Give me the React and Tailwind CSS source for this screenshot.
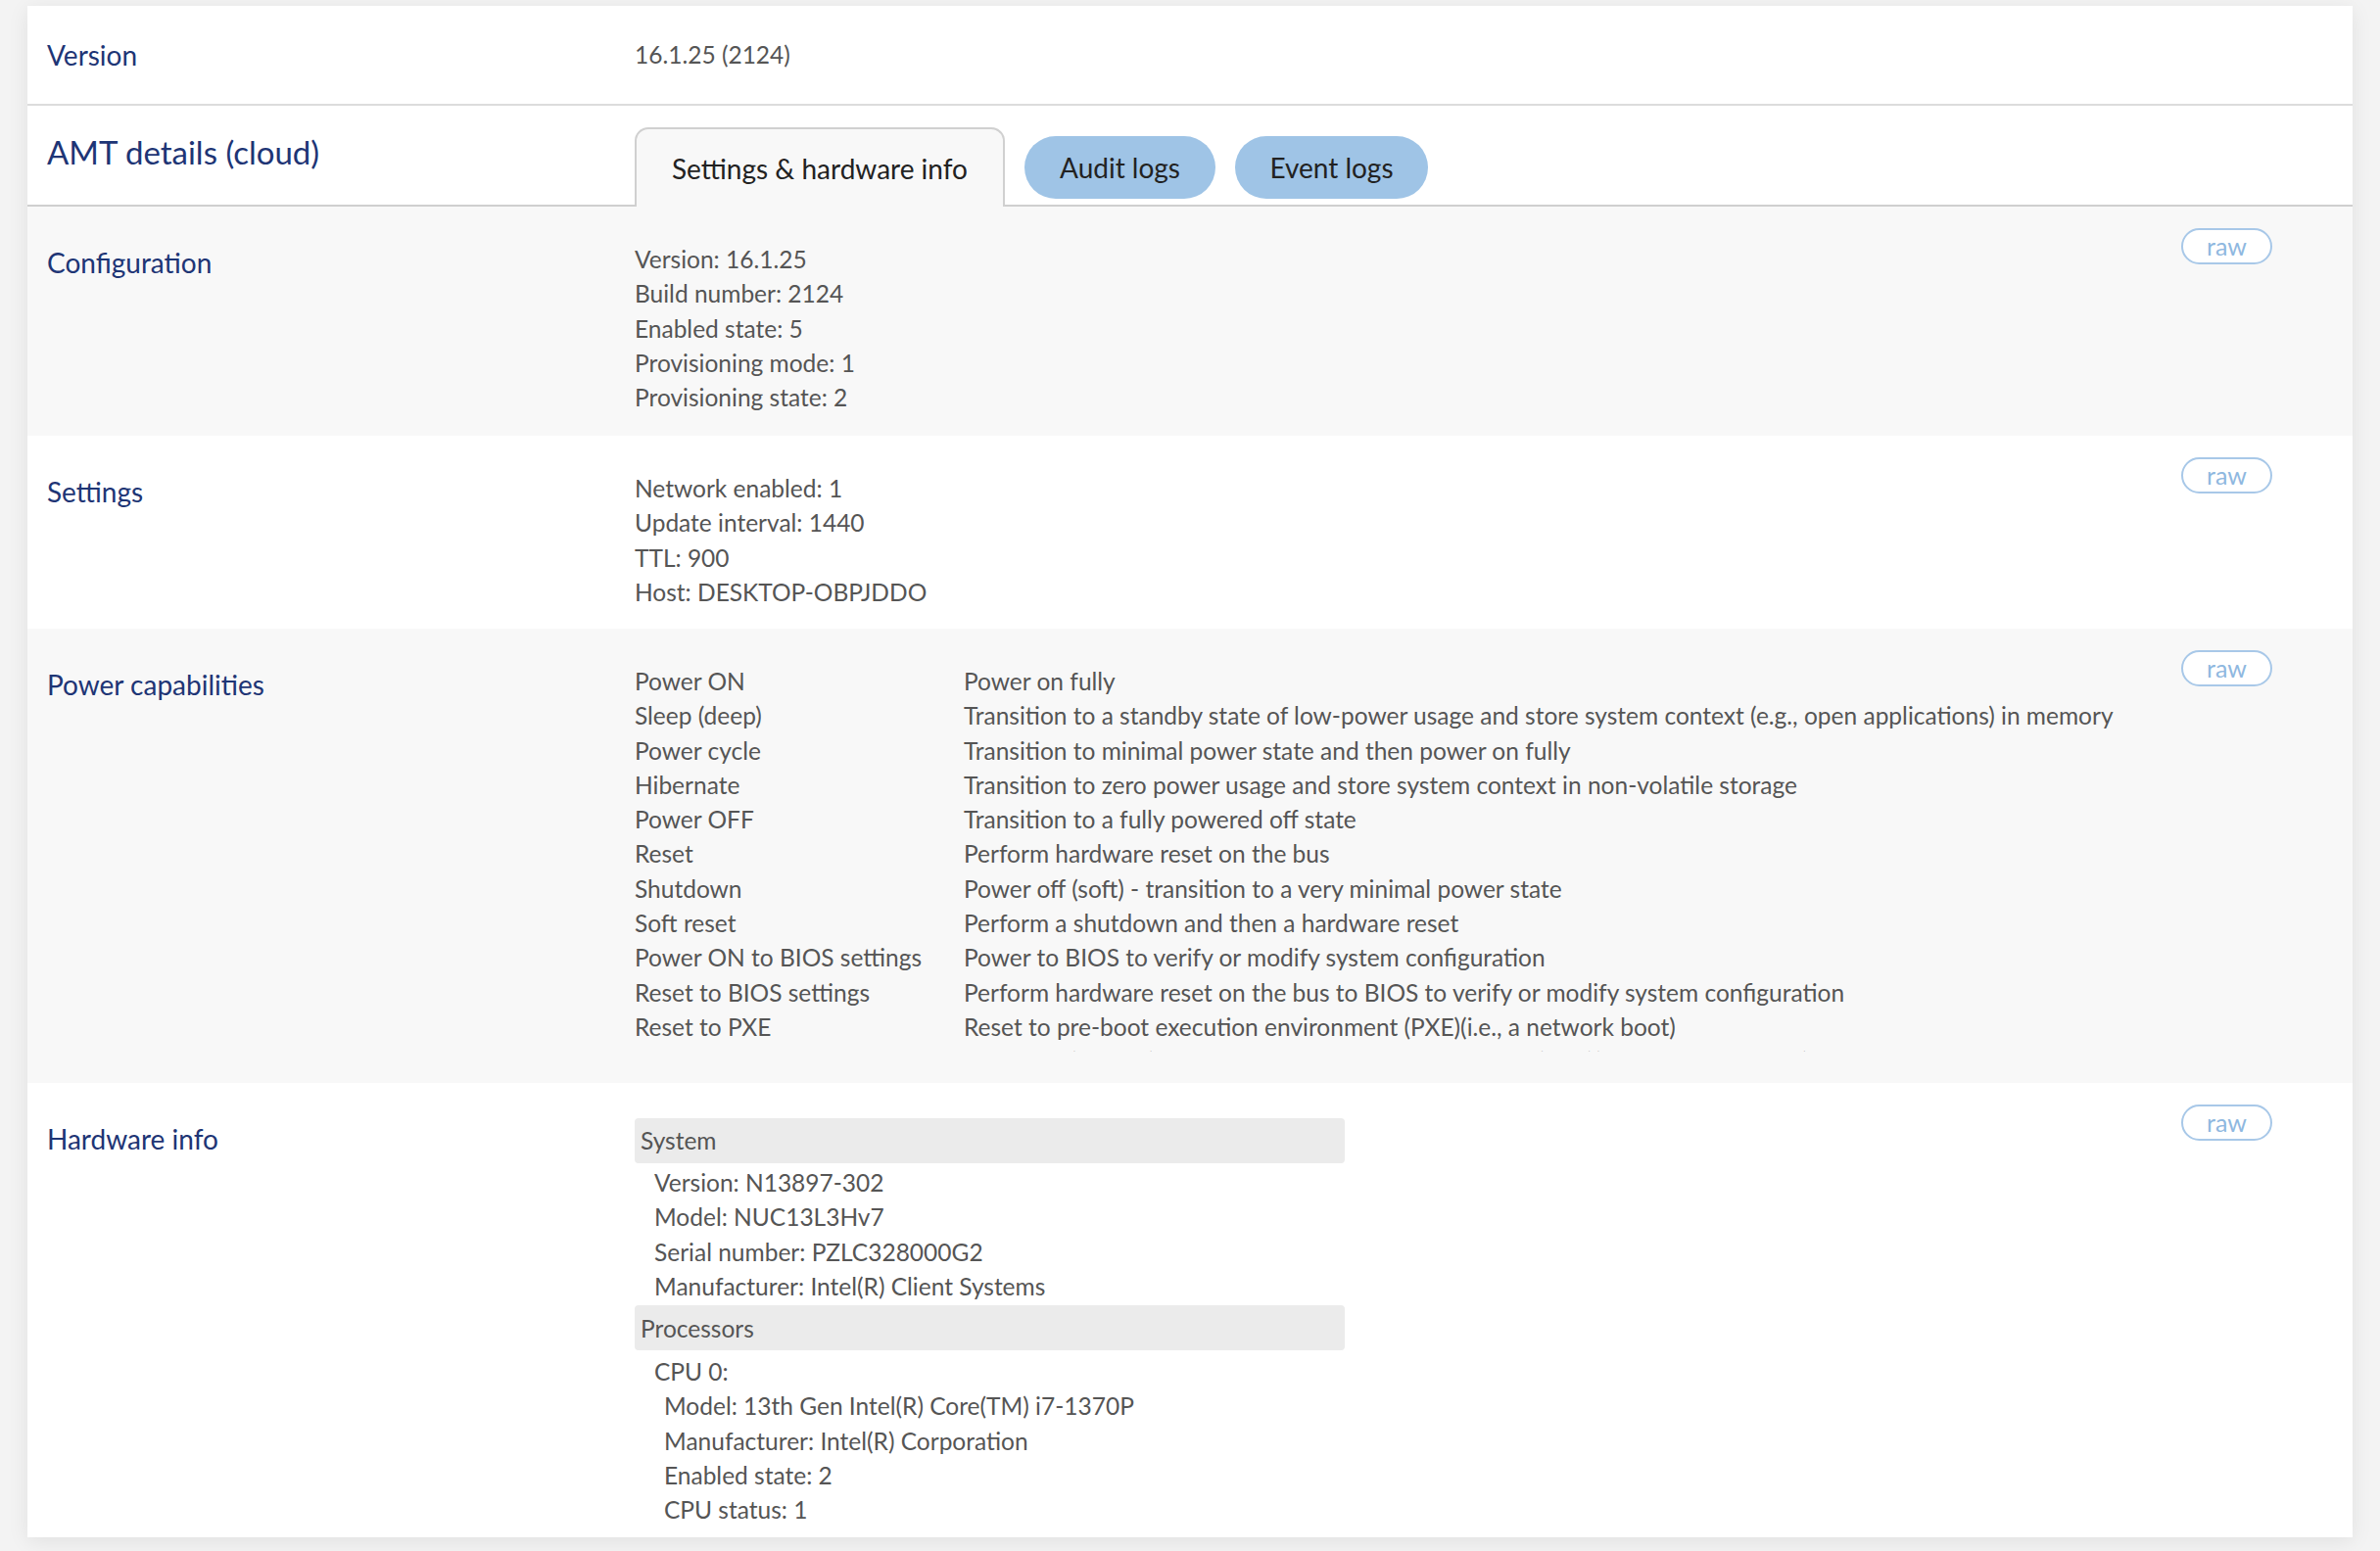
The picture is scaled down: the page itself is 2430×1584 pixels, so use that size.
const font = { fontFamily: '"Lato", "Noto Sans", sans-serif' };

function Raw() {
  return (
    <button className="w-[93px] h-[37px] rounded-full border-2 border-[#a8c8e8] text-[#8fb8e0] text-[25px] leading-none bg-white">
      raw
    </button>
  );
}

function Section({ label, gray, children, className = "" }) {
  return (
    <div className={`flex items-start ${gray ? "bg-[#f8f8f8]" : "bg-white"} ${className}`}>
      <div className="w-[620px] shrink-0 pl-[20px] text-[28px] text-[#1e3575]">{label}</div>
      <div className="flex-1 min-w-0 text-[24.5px] leading-[35.3px] text-[#555]">{children}</div>
      <div className="w-[175px] shrink-0 -mt-[14px]">
        <Raw />
      </div>
    </div>
  );
}

const power = [
  ["Power ON", "Power on fully"],
  ["Sleep (deep)", "Transition to a standby state of low-power usage and store system context (e.g., open applications) in memory"],
  ["Power cycle", "Transition to minimal power state and then power on fully"],
  ["Hibernate", "Transition to zero power usage and store system context in non-volatile storage"],
  ["Power OFF", "Transition to a fully powered off state"],
  ["Reset", "Perform hardware reset on the bus"],
  ["Shutdown", "Power off (soft) - transition to a very minimal power state"],
  ["Soft reset", "Perform a shutdown and then a hardware reset"],
  ["Power ON to BIOS settings", "Power to BIOS to verify or modify system configuration"],
  ["Reset to BIOS settings", "Perform hardware reset on the bus to BIOS to verify or modify system configuration"],
  ["Reset to PXE", "Reset to pre-boot execution environment (PXE)(i.e., a network boot)"],
  ["Power ON to PXE", "Power on (as fully) to pre-boot execution environment (PXE)(i.e., a network boot)"],
];

export default function App() {
  return (
    <div className="min-h-[1584px] bg-[#f3f3f3] pt-[6px] px-[28px]" style={font}>
      <div className="bg-white shadow-[0_4px_20px_rgba(0,0,0,0.08)]">
        <div className="flex items-center h-[102px] border-b-2 border-[#dcdcdc]">
          <div className="w-[620px] pl-[20px] text-[28px] text-[#1e3575]">Version</div>
          <div className="text-[24.5px] text-[#555]">16.1.25 (2124)</div>
        </div>
        <div className="flex items-end h-[103px] border-b-2 border-[#cfcfcf]">
          <div className="w-[620px] pl-[20px] self-center text-[33px] text-[#1e3575] pb-[6px]">AMT details (cloud)</div>
          <div className="flex items-end gap-[20px] -mb-[2px]">
            <div className="h-[81px] w-[378px] rounded-t-[14px] border-2 border-b-0 border-[#d0d0d0] bg-[#f8f8f8] flex items-center justify-center text-[28px] text-[#222]">
              Settings &amp; hardware info
            </div>
            <div className="h-[64px] w-[195px] mb-[8px] rounded-full bg-[#9fc4e6] flex items-center justify-center text-[28px] text-[#222]">Audit logs</div>
            <div className="h-[64px] w-[197px] mb-[8px] rounded-full bg-[#9fc4e6] flex items-center justify-center text-[28px] text-[#222]">Event logs</div>
          </div>
        </div>
        <Section label="Configuration" gray className="pt-[36px] h-[234px]">
          <div>Version: 16.1.25</div>
          <div>Build number: 2124</div>
          <div>Enabled state: 5</div>
          <div>Provisioning mode: 1</div>
          <div>Provisioning state: 2</div>
        </Section>
        <Section label="Settings" className="pt-[36px] h-[197px]">
          <div>Network enabled: 1</div>
          <div>Update interval: 1440</div>
          <div>TTL: 900</div>
          <div>Host: DESKTOP-OBPJDDO</div>
        </Section>
        <Section label="Power capabilities" gray className="pt-[36px] h-[464px]">
          <div className="h-[396px] overflow-hidden">
            {power.map(([a, b]) => (
              <div key={a} className="flex whitespace-nowrap">
                <div className="w-[336px] shrink-0">{a}</div>
                <div>{b}</div>
              </div>
            ))}
          </div>
        </Section>
        <Section label="Hardware info" className="pt-[36px] h-[464px]">
          <div className="w-[725px]">
            <div className="h-[46px] bg-[#ebebeb] rounded-[4px] pl-[6px] flex items-center">System</div>
            <div className="pl-[20px] py-[2px]">
              <div>Version: N13897-302</div>
              <div>Model: NUC13L3Hv7</div>
              <div>Serial number: PZLC328000G2</div>
              <div>Manufacturer: Intel(R) Client Systems</div>
            </div>
            <div className="h-[46px] bg-[#ebebeb] rounded-[4px] pl-[6px] flex items-center">Processors</div>
            <div className="pl-[20px] py-[4px]">
              <div>CPU 0:</div>
              <div className="pl-[10px]">
                <div>Model: 13th Gen Intel(R) Core(TM) i7-1370P</div>
                <div>Manufacturer: Intel(R) Corporation</div>
                <div>Enabled state: 2</div>
                <div>CPU status: 1</div>
              </div>
            </div>
          </div>
        </Section>
      </div>
    </div>
  );
}
